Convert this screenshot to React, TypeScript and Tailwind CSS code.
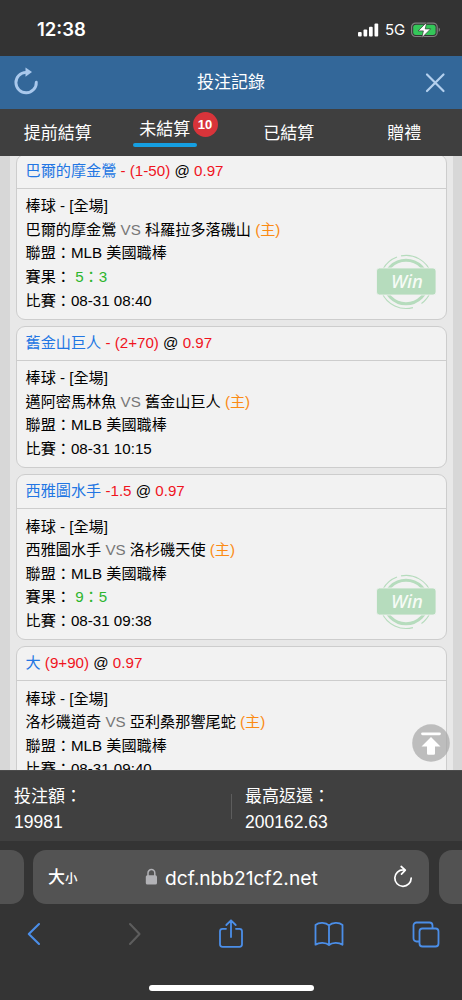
import React from 'react';

type Bet = {
  pick: string;
  odds: string;
  handicap: string;
  home: string;
  away: string;
  score?: string;
  time: string;
};

const bets: Bet[] = [
  { pick: '巴爾的摩金鶯', handicap: '- (1-50)', odds: '0.97', away: '巴爾的摩金鶯', home: '科羅拉多落磯山', score: '5：3', time: '08-31 08:40' },
  { pick: '舊金山巨人', handicap: '- (2+70)', odds: '0.97', away: '邁阿密馬林魚', home: '舊金山巨人', time: '08-31 10:15' },
  { pick: '西雅圖水手', handicap: '-1.5', odds: '0.97', away: '西雅圖水手', home: '洛杉磯天使', score: '9：5', time: '08-31 09:38' },
  { pick: '大', handicap: '(9+90)', odds: '0.97', away: '洛杉磯道奇', home: '亞利桑那響尾蛇', time: '08-31 09:40' },
];

function WinStamp() {
  return (
    <svg className="absolute right-[10px] bottom-[9px]" width="60" height="56" viewBox="0 0 60 56" fill="none">
      <g stroke="#b6dcbd">
        <circle cx="30" cy="28" r="21.8" strokeWidth="3" />
        <path strokeWidth="1.1" d="M25 1.9A26.5 26.5 0 0 1 55 19M21 3A26.5 26.5 0 0 0 7 15M6 39A26.5 26.5 0 0 0 37 53.6M45.5 49.5A26.5 26.5 0 0 0 54 39" />
      </g>
      <rect x="0.5" y="14" width="59.5" height="27" rx="3" fill="#b6dcbd" stroke="#f2f2f2" strokeWidth="0.8" />
      <text x="31" y="34" textAnchor="middle" fill="#f6fbf6" fontSize="18.5" fontStyle="italic" fontWeight="500" fontFamily="'Noto Sans', 'Open Sans', sans-serif">Win</text>
    </svg>
  );
}

function BetCard({ bet }: { bet: Bet }) {
  return (
    <article className="relative shrink-0 rounded-[9px] border border-[#cdcdcd] bg-[#f2f2f2] text-[15.15px] leading-[23.6px] text-black">
      <h2 className="h-[34px] border-b border-[#cdcdcd] pl-[9px] leading-[32px] whitespace-nowrap">
        <span className="text-[#2276e3]">{bet.pick}</span>{' '}
        <span className="text-[#f0141e]">{bet.handicap}</span> @ <span className="text-[#f0141e]">{bet.odds}</span>
      </h2>
      <div className="px-[9px] pt-[5.5px] pb-[6.5px] whitespace-nowrap">
        <p>棒球 - [全場]</p>
        <p>
          {bet.away} <span className="text-[#777]">VS</span> {bet.home} <span className="text-[#fb8b14]">(主)</span>
        </p>
        <p>聯盟：MLB 美國職棒</p>
        {bet.score && (
          <p>
            賽果： <span className="text-[#2db52d]">{bet.score}</span>
          </p>
        )}
        <p>比賽：{bet.time}</p>
      </div>
      {bet.score && <WinStamp />}
    </article>
  );
}

function StatusBar() {
  return (
    <div className="flex h-14 shrink-0 items-center justify-between bg-[#333] pt-1 pr-[21px] pl-[37px] font-['Inter',sans-serif] text-white">
      <span className="text-[18.5px] font-semibold">12:38</span>
      <div className="flex items-center">
        <svg width="21" height="14" viewBox="0 0 21 14" fill="#fff">
          <rect x="0" y="9" width="3.7" height="4.6" rx="1" />
          <rect x="5.5" y="6.5" width="3.7" height="7.1" rx="1" />
          <rect x="11" y="3.7" width="3.7" height="9.9" rx="1" />
          <rect x="16.5" y="0.5" width="3.7" height="13.1" rx="1" />
        </svg>
        <span className="ml-[6px] w-[20px] text-[15px] tracking-[-0.2px]">5G</span>
        <svg className="ml-[6px]" width="30" height="16" viewBox="0 0 30 16">
          <rect x="0.6" y="1.1" width="25.6" height="13.4" rx="4" fill="none" stroke="#808080" strokeWidth="1.2" />
          <rect x="2.2" y="2.7" width="22.4" height="10.2" rx="2.6" fill="#34c759" />
          <path d="M27.7 5.8c1.7.5 1.7 3.5 0 4z" fill="#808080" />
          <path d="M15.8 0.2 7.2 8.900h5.200L10.800 15.800 19.600 6.900h-5.400z" fill="#fff" stroke="#333" strokeWidth=".7" />
        </svg>
      </div>
    </div>
  );
}

function TitleBar() {
  return (
    <header className="flex h-[53px] shrink-0 items-center justify-between bg-[#336799] pr-[16px] pl-[12px] text-[17px] text-white">
      <svg className="-mt-[3px]" width="28" height="30" viewBox="0 0 28 30" fill="none">
        <path d="M14 6.4A10.2 10.2 0 1 0 24.3 16.2" stroke="#a9c8ec" strokeWidth="2.9" strokeLinecap="round" />
        <path d="M13.5 1.5v9.2l6.5-4.7z" fill="#a9c8ec" />
      </svg>
      <h1 className="mr-[2px] leading-6">投注記錄</h1>
      <svg width="22" height="22" viewBox="0 0 22 22" fill="none" stroke="#b4d0ee" strokeWidth="2.2" strokeLinecap="round">
        <path d="m3 2.5 16.500 16.500M19.500 2.500 3 19" />
      </svg>
    </header>
  );
}

function Tabs() {
  return (
    <nav className="grid h-[47px] shrink-0 grid-cols-4 bg-[#3f3f3f] text-center text-[17px] leading-[50px] text-white">
      <span>提前結算</span>
      <span className="relative flex flex-col items-center pt-[8px] pr-[17px]">
        <span className="leading-[26px]">未結算</span>
        <span className="h-[4px] w-[64px] rounded-full bg-[#159fe2]" />
        <span className="absolute top-[3px] left-[77px] size-[25px] rounded-full bg-[#d8343a] text-[13px] leading-[25px] font-bold">10</span>
      </span>
      <span>已結算</span>
      <span>贈禮</span>
    </nav>
  );
}

function Summary() {
  return (
    <section className="flex h-[71px] shrink-0 items-center border-t border-[#4c4c4c] bg-[#404040] text-[17px] leading-[24.5px] text-white">
      <div className="w-[231px] pt-[7px] pl-[14px]">
        <p>投注額：</p>
        <p className="text-[17.5px]">19981</p>
      </div>
      <span className="h-[25px] w-px bg-[#5d5d5d]" />
      <div className="pt-[7px] pl-[13px]">
        <p>最高返還：</p>
        <p className="text-[17.5px]">200162.63</p>
      </div>
    </section>
  );
}

function BrowserChrome() {
  return (
    <footer className="flex h-[159px] shrink-0 flex-col bg-[#343434] pt-[9px]">
      <div className="flex h-[54px] gap-[9.5px]">
        <div className="w-[23.5px] rounded-r-[13px] bg-[#525252]" />
        <div className="flex w-[396px] shrink-0 items-center rounded-[13px] bg-[#535353] pr-[16px] pl-[15px] text-white">
          <span className="w-[97px] pt-[2px] text-[17px] font-medium">
            大<span className="text-[12.5px]">小</span>
          </span>
          <svg width="13" height="18" viewBox="0 0 13 18">
            <rect x="0.8" y="7.2" width="11.2" height="9.3" rx="1.6" fill="#b2b2b6" />
            <path d="M3 8V5a3.4 3.4 0 0 1 6.8 0v3" fill="none" stroke="#b2b2b6" strokeWidth="1.5" />
          </svg>
          <span className="ml-[7px] grow pt-[3px] font-['Inter',sans-serif] text-[19.2px]">dcf.nbb21cf2.net</span>
          <svg width="20" height="24" viewBox="0 0 20 24" fill="none" stroke="#fff" strokeWidth="1.7" strokeLinecap="round" strokeLinejoin="round">
            <path d="M10.4 4.9A8.2 8.2 0 1 0 18.2 13.1M8.2 1.5l4.1 3.7-3.8 4" />
          </svg>
        </div>
        <div className="grow rounded-l-[13px] bg-[#525252]" />
      </div>
      <div className="flex items-center pt-[12px] pl-[26px]">
        <svg width="16" height="36" viewBox="0 0 16 36" fill="none" stroke="#4b8ee8" strokeWidth="2.1" strokeLinecap="round" strokeLinejoin="round">
          <path d="M13 8 2.8 18 13 28" />
        </svg>
        <svg className="ml-[85px]" width="16" height="36" viewBox="0 0 16 36" fill="none" stroke="#5d5d5d" strokeWidth="2.1" strokeLinecap="round" strokeLinejoin="round">
          <path d="M3 8 12.5 18 3 28" />
        </svg>
        <svg className="ml-[75px]" width="26" height="36" viewBox="0 0 26 36" fill="none" stroke="#4b8ee8" strokeWidth="1.8" strokeLinecap="round" strokeLinejoin="round">
          <path d="M8 12.8H4.5a2.5 2.5 0 0 0-2.5 2.5v13a2.5 2.5 0 0 0 2.500 2.500h17a2.500 2.500 0 0 0 2.500-2.500v-13a2.500 2.500 0 0 0-2.500-2.500H18M13 21V4.500M8.300 9 13 4.300 17.700 9" />
        </svg>
        <svg className="ml-[68.5px]" width="32" height="36" viewBox="0 0 32 36" fill="none" stroke="#4b8ee8" strokeWidth="1.8" strokeLinejoin="round">
          <path d="M16 9.500C13 6.300 6 6 2.500 9V28.700c3.500-2.500 10.500-2.500 13.500.3 3-2.800 10-2.800 13.500-.3V9C26 6 19 6.300 16 9.500zV29" />
        </svg>
        <svg className="ml-[66.5px]" width="30" height="36" viewBox="0 0 30 36" fill="none" stroke="#4b8ee8" strokeWidth="1.8">
          <path d="M8.500 25.500H5.500a3 3 0 0 1-3-3v-13a3 3 0 0 1 3-3h13a3 3 0 0 1 3 3v3" />
          <rect x="8.500" y="12.500" width="19" height="18" rx="3" />
        </svg>
      </div>
      <div className="mx-auto mt-[32.5px] h-[6px] w-[165px] rounded-full bg-white" />
    </footer>
  );
}

export default function App() {
  return (
    <div className="flex h-[1000px] w-[462px] flex-col overflow-hidden bg-[#333] font-['Liberation_Sans','Noto_Sans_CJK_TC',sans-serif]">
      <StatusBar />
      <TitleBar />
      <Tabs />
      <main className="relative h-[614px] shrink-0 overflow-hidden bg-[#d7d7d7] pr-[9.5px] pl-[9.5px]">
        <div className="-mt-[2.3px] flex flex-col gap-1.5 bg-[#e8e8e8] px-[6px]">
          {bets.map((bet) => (
            <BetCard key={bet.time} bet={bet} />
          ))}
        </div>
        <svg className="absolute right-[12px] bottom-[8px]" width="38" height="38" viewBox="0 0 38 38">
          <circle cx="19" cy="19" r="18.800" fill="#a8a8a8" fillOpacity=".72" />
          <path d="M10.500 9.800h17" stroke="#fff" strokeWidth="2.800" strokeLinecap="round" />
          <path d="M19 13 28.500 22.500h-5.500v7a1.200 1.200 0 0 1-1.200 1.200h-5.600a1.200 1.200 0 0 1-1.200-1.200v-7H9.500z" fill="#fff" />
        </svg>
      </main>
      <Summary />
      <BrowserChrome />
    </div>
  );
}
